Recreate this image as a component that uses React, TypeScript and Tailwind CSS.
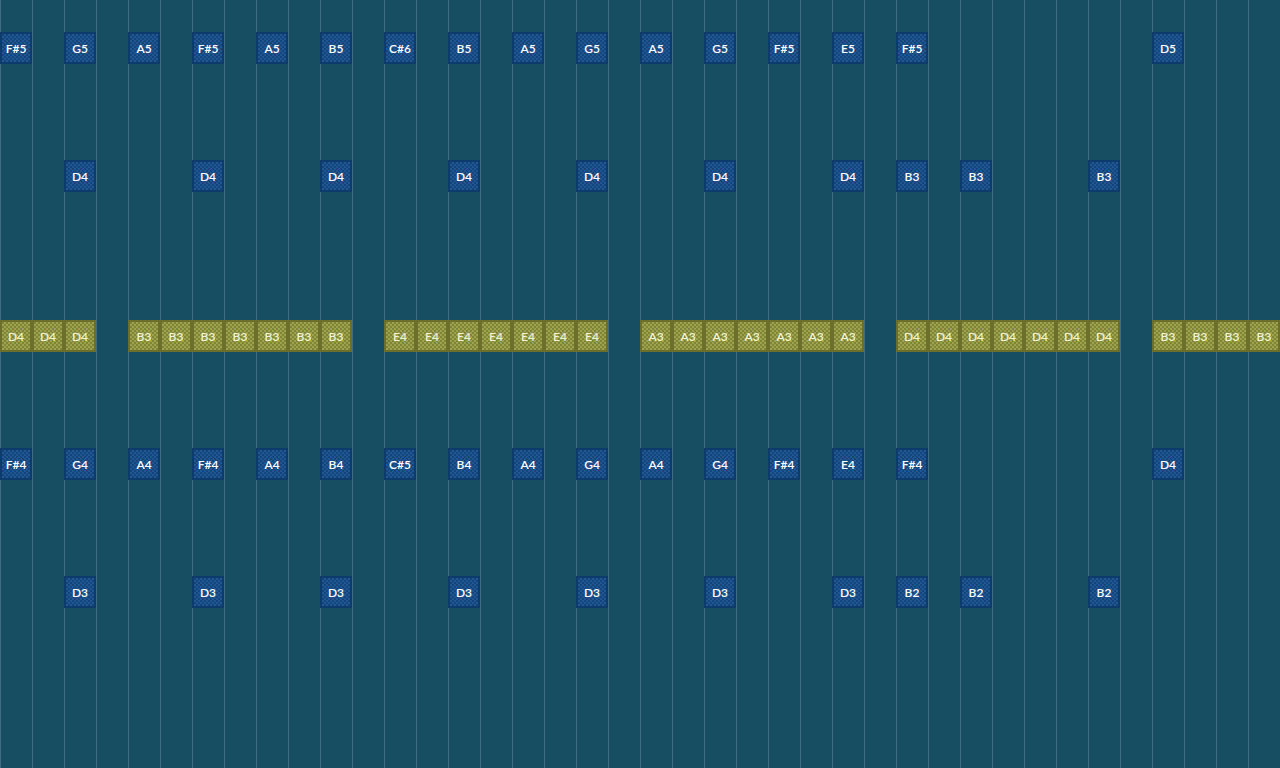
import { FC } from 'react';

type Tone = 'blue' | 'olive';

// column index -> note name, 40 columns of 32px
const rows: { tone: Tone; gap: string; notes: Record<number, string> }[] = [
  {
    tone: 'blue',
    gap: 'mt-8',
    notes: {
      0: 'F#5', 2: 'G5', 4: 'A5', 6: 'F#5', 8: 'A5', 10: 'B5', 12: 'C#6', 14: 'B5',
      16: 'A5', 18: 'G5', 20: 'A5', 22: 'G5', 24: 'F#5', 26: 'E5', 28: 'F#5', 36: 'D5',
    },
  },
  {
    tone: 'blue',
    gap: 'mt-24',
    notes: {
      2: 'D4', 6: 'D4', 10: 'D4', 14: 'D4', 18: 'D4', 22: 'D4', 26: 'D4',
      28: 'B3', 30: 'B3', 34: 'B3',
    },
  },
  {
    tone: 'olive',
    gap: 'mt-32',
    notes: {
      0: 'D4', 1: 'D4', 2: 'D4',
      4: 'B3', 5: 'B3', 6: 'B3', 7: 'B3', 8: 'B3', 9: 'B3', 10: 'B3',
      12: 'E4', 13: 'E4', 14: 'E4', 15: 'E4', 16: 'E4', 17: 'E4', 18: 'E4',
      20: 'A3', 21: 'A3', 22: 'A3', 23: 'A3', 24: 'A3', 25: 'A3', 26: 'A3',
      28: 'D4', 29: 'D4', 30: 'D4', 31: 'D4', 32: 'D4', 33: 'D4', 34: 'D4',
      36: 'B3', 37: 'B3', 38: 'B3', 39: 'B3',
    },
  },
  {
    tone: 'blue',
    gap: 'mt-24',
    notes: {
      0: 'F#4', 2: 'G4', 4: 'A4', 6: 'F#4', 8: 'A4', 10: 'B4', 12: 'C#5', 14: 'B4',
      16: 'A4', 18: 'G4', 20: 'A4', 22: 'G4', 24: 'F#4', 26: 'E4', 28: 'F#4', 36: 'D4',
    },
  },
  {
    tone: 'blue',
    gap: 'mt-24',
    notes: {
      2: 'D3', 6: 'D3', 10: 'D3', 14: 'D3', 18: 'D3', 22: 'D3', 26: 'D3',
      28: 'B2', 30: 'B2', 34: 'B2',
    },
  },
];

const toneClass: Record<Tone, string> = {
  blue:
    'border-[#0d3b6b] bg-[repeating-conic-gradient(#1f5694_0_25%,#164679_0_50%)] text-white',
  olive:
    'border-[#6b6f2c] bg-[repeating-conic-gradient(#9da24e_0_25%,#7f8437_0_50%)] text-[#f3f3d4]',
};

const Note: FC<{ name: string; tone: Tone }> = ({ name, tone }) => (
  <div
    className={`w-8 h-8 border-2 bg-[length:4px_4px] flex items-center justify-center pt-px text-[12px] font-semibold leading-none ${toneClass[tone]}`}
  >
    {name}
  </div>
);

const App: FC = () => {
  return (
    <div
      className="w-[1280px] h-[768px] overflow-hidden bg-[#184e62] bg-[repeating-linear-gradient(90deg,#3e6e80_0_1px,transparent_1px_32px)] bg-[position:32px_0] font-['Lato','Liberation_Sans',sans-serif]"
    >
      {rows.map((row, r) => (
        <div key={r} className={`grid grid-cols-[repeat(40,32px)] h-8 ${row.gap}`}>
          {Array.from({ length: 40 }, (_, c) =>
            row.notes[c] ? <Note key={c} name={row.notes[c]} tone={row.tone} /> : <div key={c} />,
          )}
        </div>
      ))}
    </div>
  );
};

export default App;
